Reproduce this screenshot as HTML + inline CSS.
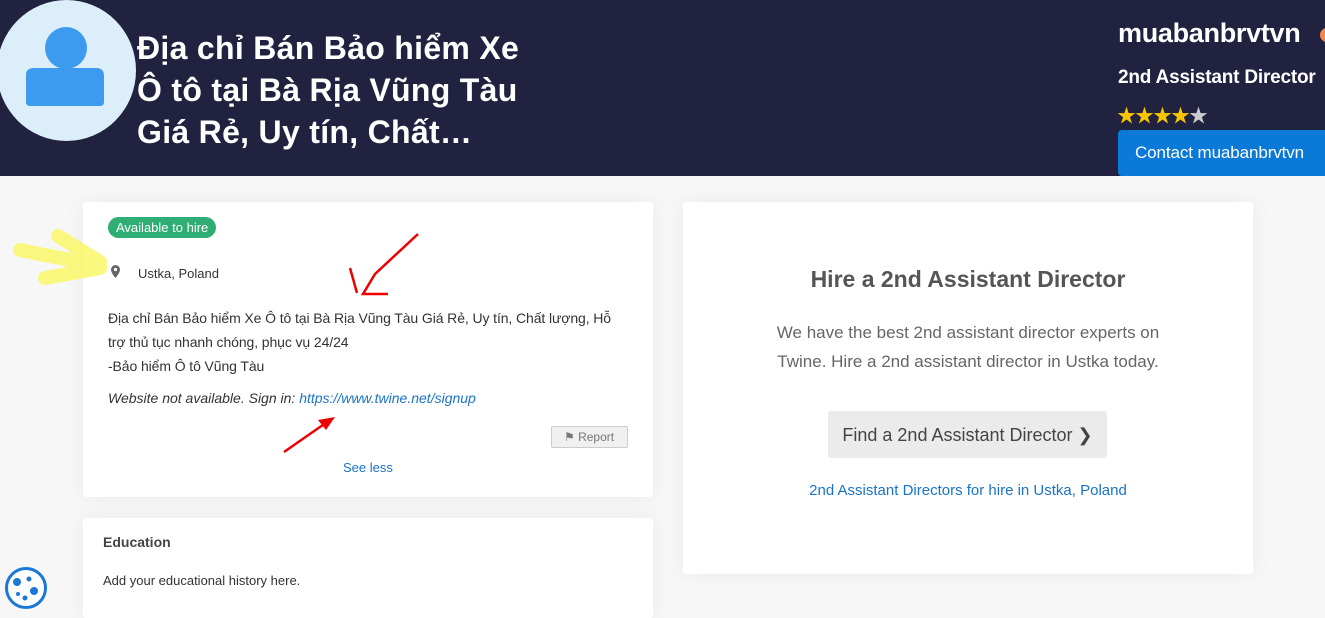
<!DOCTYPE html>
<html><head><meta charset="utf-8"><style>
*{margin:0;padding:0;box-sizing:border-box}
body{width:1325px;height:607px;overflow:hidden;background:#f7f7f7;font-family:"Liberation Sans","Noto Sans CJK SC",sans-serif;position:relative;color:#333}
.hdr{position:absolute;left:0;top:0;width:1325px;height:176px;background:#202240}
.av{position:absolute;left:-3px;top:0;width:139px;height:141px;border-radius:50%;background:#ddeefb}
.title{position:absolute;left:137px;top:27px;color:#fff;font-weight:bold;font-size:32px;letter-spacing:0.3px;line-height:42px;white-space:nowrap}
.un{position:absolute;left:1118px;top:18px;color:#fff;font-weight:bold;font-size:27px;letter-spacing:-0.3px}
.role{position:absolute;left:1118px;top:67px;color:#fff;font-weight:bold;font-size:19px;white-space:nowrap;letter-spacing:-0.2px}
.stars{position:absolute;left:1117px;top:101px;font-size:19px;letter-spacing:-1px;color:#f7c600}
.btn{position:absolute;left:1118px;top:130px;width:220px;height:46px;background:#0b79d8;border-radius:4px;color:#fff;font-size:17px;padding:13px 0 0 17px;white-space:nowrap;letter-spacing:-0.1px}
.card{position:absolute;background:#fff;border-radius:3px;box-shadow:0 0 20px rgba(0,0,0,.06)}
.badge{position:absolute;left:25px;top:15px;background:#2eae74;color:#fff;font-size:13px;border-radius:11px;padding:3px 8px}
.p{position:absolute;font-size:14px;color:#333}
a{color:#1a73c9;text-decoration:none}
</style></head><body>
<div class="hdr">
<div class="av"><svg width="139" height="141" viewBox="0 0 139 141"><circle cx="69" cy="48" r="21" fill="#3d9bef"/><path d="M29 75 Q29 68 37 68 L99 68 Q107 68 107 76 L107 102 Q107 106 103 106 L33 106 Q29 106 29 102Z" fill="#3d9bef"/></svg></div>
<div class="title">Địa chỉ Bán Bảo hiểm Xe<br>Ô tô tại Bà Rịa Vũng Tàu<br>Giá Rẻ, Uy tín, Chất…</div>
<div class="un">muabanbrvtvn</div>
<div style="position:absolute;left:1320px;top:28px;width:14px;height:14px;border-radius:50%;background:#f08a4b"></div>
<div class="role">2nd Assistant Director</div>
<div class="stars">★★★★<span style="color:#ccc">★</span></div>
<div class="btn">Contact muabanbrvtvn</div>
</div>
<div class="card" style="left:83px;top:202px;width:570px;height:295px">
<div class="badge">Available to hire</div>
<svg style="position:absolute;left:28px;top:63px" width="9" height="13" viewBox="0 0 9 13"><path d="M4.5 0A4.5 4.5 0 0 0 0 4.5C0 8 4.5 13 4.5 13S9 8 9 4.5A4.5 4.5 0 0 0 4.5 0Z" fill="#666"/><circle cx="4.5" cy="4.5" r="1.6" fill="#fff"/></svg>
<div class="p" style="left:55px;top:64px;font-size:13px">Ustka, Poland</div>
<div class="p" style="left:25px;top:104px;width:540px;line-height:24px;letter-spacing:-0.1px;white-space:nowrap">Địa chỉ Bán Bảo hiểm Xe Ô tô tại Bà Rịa Vũng Tàu Giá Rẻ, Uy tín, Chất lượng, Hỗ<br>trợ thủ tục nhanh chóng, phục vụ 24/24<br>-Bảo hiểm Ô tô Vũng Tàu</div>
<div class="p" style="left:25px;top:188px;font-style:italic">Website not available. Sign in: <a>https://www.twine.net/signup</a></div>
<div style="position:absolute;left:468px;top:224px;width:77px;height:22px;border:1px solid #ccc;background:#f0f0f0;border-radius:2px;font-size:12px;color:#777;padding:3px 0 0 12px">⚑ Report</div>
<div class="p" style="left:260px;top:258px;font-size:13px"><a>See less</a></div>
</div>
<svg style="position:absolute;left:0;top:0" width="700" height="470"><path d="M58 236 L100 262 M20 250 L100 266 M45 278 L100 268" stroke="#faf76a" stroke-width="14" stroke-linecap="round" opacity=".85" fill="none"/>
<path d="M418 234 L375 274 L363 294 L388 294 M350 268 L357 293" stroke="#e00" stroke-width="2.5" fill="none"/>
<path d="M284 452 L330 420" stroke="#e00" stroke-width="2.5"/><path d="M335 417 L318 420 L326 430Z" fill="#e00"/></svg>
<div class="card" style="left:83px;top:518px;width:570px;height:100px">
<div class="p" style="left:20px;top:16px;font-weight:bold;color:#444">Education</div>
<div class="p" style="left:20px;top:55px;font-size:13px">Add your educational history here.</div>
</div>
<div style="position:absolute;left:5px;top:567px;width:42px;height:42px;border-radius:50%;background:#fff;border:3px solid #1b78d6"><svg width="36" height="36"><circle cx="9" cy="12" r="4" fill="#1b78d6"/><circle cx="21" cy="9" r="2.5" fill="#1b78d6"/><circle cx="26" cy="21" r="4" fill="#1b78d6"/><circle cx="10" cy="24" r="2" fill="#1b78d6"/><circle cx="17" cy="28" r="2.5" fill="#1b78d6"/></svg></div>
<div class="card" style="left:683px;top:202px;width:570px;height:372px;text-align:center">
<div style="position:absolute;top:64px;width:100%;font-size:23px;font-weight:bold;color:#555">Hire a 2nd Assistant Director</div>
<div style="position:absolute;top:116px;left:70px;width:430px;font-size:17px;line-height:29px;color:#666">We have the best 2nd assistant director experts on Twine. Hire a 2nd assistant director in Ustka today.</div>
<div style="position:absolute;left:145px;top:209px;width:279px;height:47px;background:#ebebeb;border-radius:3px;font-size:18px;color:#444;padding-top:14px">Find a 2nd Assistant Director ❯</div>
<div style="position:absolute;top:280px;width:100%;font-size:15px"><a>2nd Assistant Directors for hire in Ustka, Poland</a></div>
</div>
</body></html>
